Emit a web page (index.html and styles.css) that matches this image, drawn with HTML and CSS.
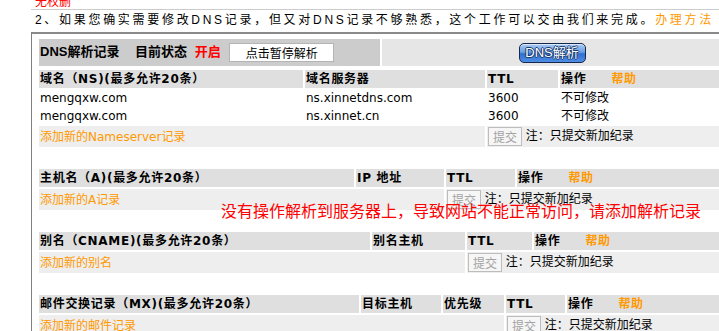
FILE: index.html
```html
<!DOCTYPE html>
<html lang="zh-CN">
<head>
    <meta charset="UTF-8">
    <title>DNS解析记录</title>
    <link rel="stylesheet" href="styles.css">
</head>
<body>
    <div class="page">
        <div class="notice">
            <div class="notice-row first"><span class="warn">无权删</span></div>
            <div class="notice-row second">2、如果您确实需要修改DNS记录，但又对DNS记录不够熟悉，这个工作可以交由我们来完成。<span class="orange">办理方法</span></div>
        </div>

        <div class="panel">
            <table class="bar">
                <tr>
                    <td class="bar-left">
                        <b class="bar-title">DNS解析记录</b>
                        <b class="bar-state">目前状态</b>
                        <b class="on">开启</b>
                        <button class="pause">点击暂停解析</button>
                    </td>
                    <td class="bar-right"><button class="dns-btn">DNS解析</button></td>
                </tr>
            </table>

            <!-- NS -->
            <table class="records">
                <tr class="head">
                    <th class="ns1">域名（NS)(最多允许20条）</th>
                    <th class="ns2">域名服务器</th>
                    <th class="ns3">TTL</th>
                    <th class="ns4">操作<span class="help">帮助</span></th>
                </tr>
                <tr class="data">
                    <td>mengqxw.com</td>
                    <td>ns.xinnetdns.com</td>
                    <td>3600</td>
                    <td>不可修改</td>
                </tr>
                <tr class="data">
                    <td>mengqxw.com</td>
                    <td>ns.xinnet.cn</td>
                    <td>3600</td>
                    <td>不可修改</td>
                </tr>
                <tr class="add">
                    <td colspan="2"><span class="orange">添加新的Nameserver记录</span></td>
                    <td colspan="2"><button class="submit" disabled>提交</button> 注：只提交新加纪录</td>
                </tr>
            </table>

            <!-- A -->
            <table class="records gap">
                <tr class="head">
                    <th class="a1">主机名（A)(最多允许20条）</th>
                    <th class="a2">IP 地址</th>
                    <th class="a3">TTL</th>
                    <th class="a4">操作<span class="help">帮助</span></th>
                </tr>
                <tr class="add">
                    <td colspan="2"><span class="orange">添加新的A记录</span></td>
                    <td colspan="2"><button class="submit" disabled>提交</button> 注：只提交新加纪录</td>
                </tr>
            </table>

            <!-- CNAME -->
            <table class="records gap">
                <tr class="head">
                    <th class="c1">别名（CNAME)(最多允许20条）</th>
                    <th class="c2">别名主机</th>
                    <th class="c3">TTL</th>
                    <th class="c4">操作<span class="help">帮助</span></th>
                </tr>
                <tr class="add">
                    <td colspan="2"><span class="orange">添加新的别名</span></td>
                    <td colspan="2"><button class="submit" disabled>提交</button> 注：只提交新加纪录</td>
                </tr>
            </table>

            <!-- MX -->
            <table class="records gap">
                <tr class="head">
                    <th class="m1">邮件交换记录（MX)(最多允许20条）</th>
                    <th class="m2">目标主机</th>
                    <th class="m3">优先级</th>
                    <th class="m4">TTL</th>
                    <th class="m5">操作<span class="help">帮助</span></th>
                </tr>
                <tr class="add">
                    <td colspan="3"><span class="orange">添加新的邮件记录</span></td>
                    <td colspan="2"><button class="submit" disabled>提交</button> 注：只提交新加纪录</td>
                </tr>
            </table>
        </div>

        <div class="alert">没有操作解析到服务器上，导致网站不能正常访问，请添加解析记录</div>
    </div>
</body>
</html>
```

FILE: styles.css
```css
html, body {
    margin: 0;
    padding: 0;
    overflow: hidden;
    background: #fff;
}
body {
    font-family: 'DejaVu Sans', 'Noto Sans CJK SC', sans-serif;
    font-size: 12px;
    color: #000;
}
.page {
    position: relative;
    width: 723px;
}
.orange {
    color: #ff9900;
}

/* top notice lines */
.notice {
    margin-left: 31px;
}
.notice-row {
    padding-left: 4px;
    font-family: 'Liberation Sans', 'Noto Sans CJK SC', sans-serif;
}
.notice-row.first {
    height: 9px;
    overflow: hidden;
    border-bottom: 1px solid #cccccc;
}
.notice-row.first .warn {
    display: block;
    margin-top: -4px;
    line-height: 12px;
    color: #ff0000;
}
.notice-row.second {
    height: 22px;
    line-height: 21px;
    letter-spacing: 2.7px;
    white-space: nowrap;
}

/* main panel */
.panel {
    margin-left: 31px;
    width: 691px;
    border-top: 2px solid #8a8a8a;
    border-left: 1px solid #808080;
    padding: 3px 0 0 5px;
}
table {
    border-collapse: separate;
    border-spacing: 2px;
    table-layout: fixed;
    width: 686px;
}
th, td {
    padding: 0 0 0 1px;
    line-height: 14px;
    text-align: left;
    vertical-align: middle;
    white-space: nowrap;
    overflow: hidden;
}

/* status bar */
.bar tr {
    height: 27px;
}
.bar-left {
    width: 340px;
    background: #cccccc;
    font-family: 'Liberation Sans', 'Noto Sans CJK SC', sans-serif;
    font-size: 13px;
}
.bar-right {
    width: 338px;
    background: #e6e6e6;
    text-align: center;
}
.bar-state {
    margin-left: 12px;
}
.on {
    color: #ff0000;
    margin-left: 4px;
}
.pause {
    margin-left: 5px;
    width: 105px;
    height: 19px;
    padding: 0;
    background: #fff;
    border: 1px solid #b4b4b4;
    font-family: 'Noto Sans CJK SC', sans-serif;
    font-size: 12px;
    line-height: 17px;
    color: #000;
    vertical-align: middle;
}
.dns-btn {
    width: 67px;
    height: 20px;
    padding: 0;
    border: 1px solid #16284d;
    border-radius: 5px;
    background: linear-gradient(#a9cbf3 0%, #6a9fe3 45%, #2f6fcf 55%, #4f8ee6 100%);
    box-shadow: inset 0 1px 0 rgba(255,255,255,0.6);
    color: #fff;
    font-family: 'Liberation Sans', 'Noto Sans CJK SC', sans-serif;
    font-size: 13px;
    line-height: 18px;
    text-shadow: 1px 0 #1b3a70, -1px 0 #1b3a70, 0 1px #1b3a70, 0 -1px #1b3a70;
    vertical-align: middle;
}

/* record tables */
.records.gap {
    margin-top: 18px;
}
.records .head {
    height: 18px;
}
.records th {
    background: #dfdfdf;
    font-weight: bold;
    letter-spacing: 0.7px;
}
.records .data {
    height: 16px;
}
.records .add {
    height: 21px;
}
.records .add td {
    background: #eeeeee;
}
.help {
    margin-left: 25px;
    color: #ff9900;
}
.submit {
    height: 19px;
    padding: 0 4px;
    background: #f6f6f6;
    border: 1px solid #bdbdbd;
    color: #a3a3a3;
    font-family: 'Noto Sans CJK SC', sans-serif;
    font-size: 12px;
    line-height: 17px;
    vertical-align: middle;
}

/* column widths (cell width minus 1px padding) */
.ns1 { width: 263px; }
.ns2 { width: 179px; }
.ns3 { width: 70px; }
.ns4 { width: 160px; }

.a1 { width: 314px; }
.a2 { width: 87px; }
.a3 { width: 68px; }
.a4 { width: 203px; }

.c1 { width: 330px; }
.c2 { width: 92px; }
.c3 { width: 64px; }
.c4 { width: 186px; }

.m1 { width: 319px; }
.m2 { width: 79px; }
.m3 { width: 60px; }
.m4 { width: 58px; }
.m5 { width: 153px; }

/* warning that lies over the tables */
.alert {
    position: absolute;
    left: 221px;
    top: 201px;
    font-family: 'Noto Sans CJK SC', sans-serif;
    font-size: 16px;
    line-height: 18px;
    color: #ff0000;
    white-space: nowrap;
}
```
